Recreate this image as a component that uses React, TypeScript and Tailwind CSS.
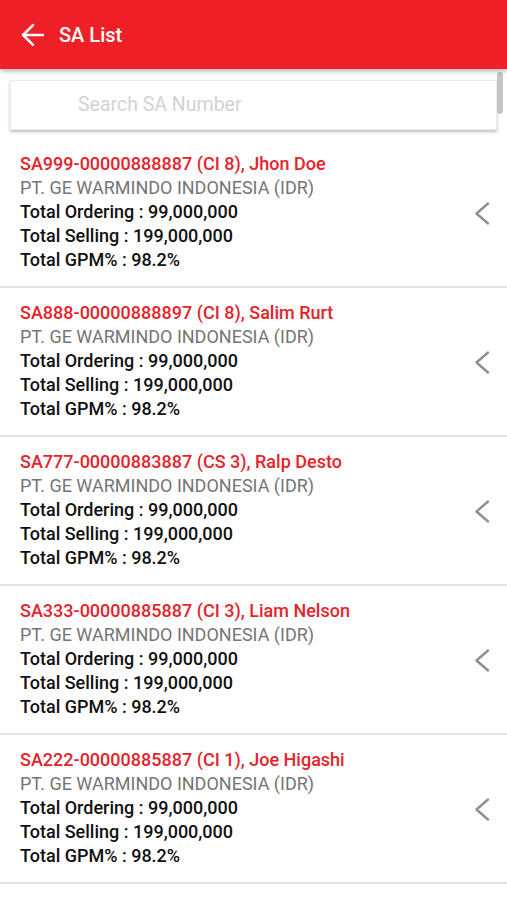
import { ArrowLeft } from "lucide-react"

interface SaItem {
  code: string
  name: string
}

const ITEMS: SaItem[] = [
  { code: "SA999-00000888887 (CI 8)", name: "Jhon Doe" },
  { code: "SA888-00000888897 (CI 8)", name: "Salim Rurt" },
  { code: "SA777-00000883887 (CS 3)", name: "Ralp Desto" },
  { code: "SA333-00000885887 (CI 3)", name: "Liam Nelson" },
  { code: "SA222-00000885887 (CI 1)", name: "Joe Higashi" },
]

const SaRow = ({ item }: { item: SaItem }) => {
  return (
    <div className="flex items-center border-b-2 border-[#e2e2e2] pl-5 pr-[17px] pt-[13px] pb-[14px]">
      <div className="flex-1 text-[18px] leading-6">
        <p className="font-medium text-[#e5232b]">
          {item.code}, {item.name}
        </p>
        <p className="text-[#757575]">PT. GE WARMINDO INDONESIA (IDR)</p>
        <p className="font-medium text-[#111]">Total Ordering : 99,000,000</p>
        <p className="font-medium text-[#111]">Total Selling : 199,000,000</p>
        <p className="font-medium text-[#111]">Total GPM% : 98.2%</p>
      </div>
      <svg width="16" height="23" viewBox="0 0 16 23" fill="none" className="mt-[2px]">
        <polyline points="14,1.5 2.5,11.5 14,21.5" stroke="#8f8f8f" strokeWidth="2.4" strokeLinecap="round" strokeLinejoin="round" />
      </svg>
    </div>
  )
}

export default function App() {
  return (
    <div className="relative w-[507px] h-[900px] overflow-hidden bg-white font-['Roboto',sans-serif]">
      <header className="relative z-10 flex items-center h-[69px] bg-[#ee1f27] pl-[16px] shadow-[0_2px_5px_rgba(0,0,0,0.3)]">
        <ArrowLeft size={34} className="text-white" strokeWidth={1.8} />
        <h1 className="ml-[9px] text-[20px] font-medium text-white">SA List</h1>
      </header>

      <div className="px-[10px] pt-[11px] pb-[9px]">
        <div className="h-[50px] flex items-center pl-[67px] bg-white border border-[#ececec] shadow-[0_2px_3px_rgba(0,0,0,0.25)]">
          <span className="text-[19.5px] text-[#d3d3d3]">Search SA Number</span>
        </div>
      </div>

      <div>
        {ITEMS.map((item) => (
          <SaRow key={item.code} item={item} />
        ))}
      </div>

      <div className="absolute right-[4px] top-[72px] w-[6px] h-[42px] rounded-full bg-[#c4c4c4]" />
    </div>
  )
}
